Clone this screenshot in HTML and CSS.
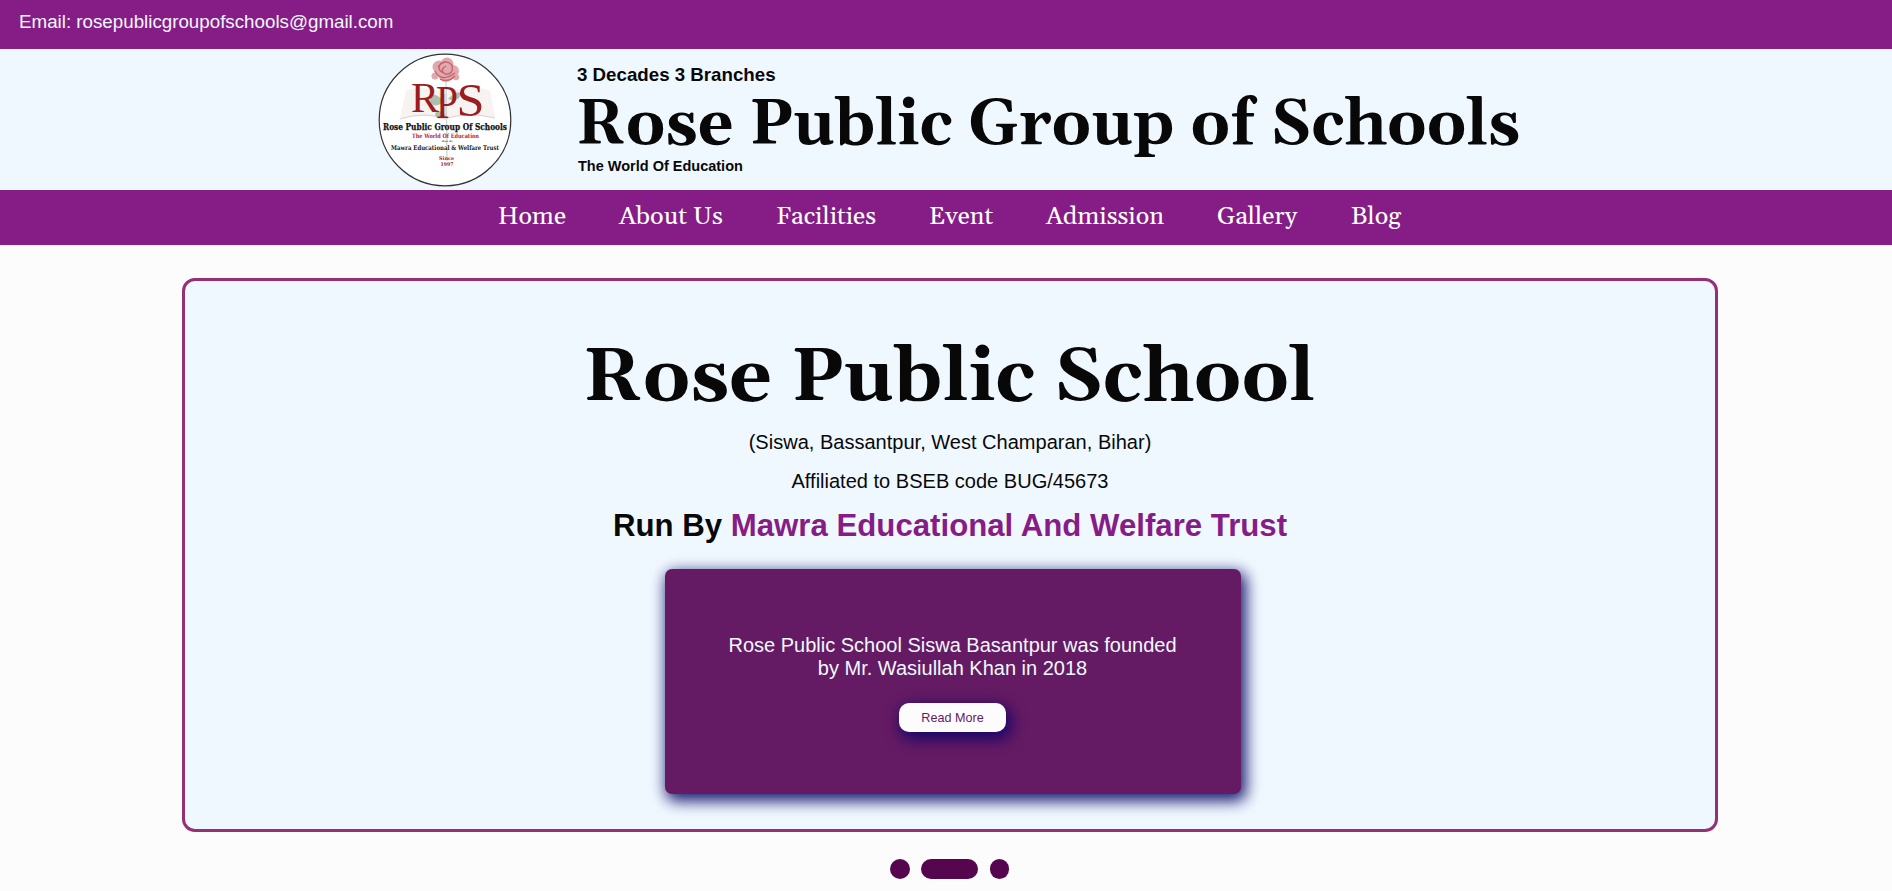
FILE: index.html
```html
<!DOCTYPE html>
<html lang="en">
<head>
<meta charset="utf-8">
<title>Rose Public Group of Schools</title>
<link rel="stylesheet" href="styles.css">
</head>
<body>
<div class="topbar">Email: rosepublicgroupofschools@gmail.com</div>
<header class="header">
  <svg class="logo" viewBox="0 0 134 134" role="img" aria-label="Rose Public School logo">
    <circle cx="67" cy="67" r="65.8" fill="#fff" stroke="#333" stroke-width="1.2"/>
    <g opacity=".5">
      <path d="M28 37 Q48 31 67 41 Q86 31 112 37 L117 65 Q87 59 67 66 Q47 59 22 66Z" fill="#eee9e3"/>
      <path d="M22 66 Q47 58 67 66 Q89 58 117 65 M67 41V65" fill="none" stroke="#b7a797" stroke-width="1"/>
      <path d="M68 27 L69 108" stroke="#a5b09f" stroke-width="1.3"/>
      <path d="M67 48 Q53 37 51 43 Q53 59 67 48Z M68 62 Q58 54 57 62 Q61 69 68 62Z M70 46 Q80 36 83 41 Q80 50 70 46Z" fill="#60805b"/>
    </g>
    <g fill="#dfa0a4" opacity=".9">
      <circle cx="61" cy="14" r="6.5"/><circle cx="69" cy="11" r="6.5"/><circle cx="75" cy="18" r="6"/><circle cx="68" cy="21" r="8"/><circle cx="57" cy="23" r="3.5"/><circle cx="78" cy="24" r="3.2"/>
    </g>
    <path d="M60 14q7-9 14-2q2 10-7 9q-6-4 1-8 M57 18q6 12 20 2 M63 10q-5 6 2 10 M62 26q8 4 15-3" fill="none" stroke="#c4606c" stroke-width="1.3"/>
    <g class="logo-serif" fill="#9c1c20">
      <text x="33" y="58.5" font-size="43" textLength="28" lengthAdjust="spacingAndGlyphs">R</text>
      <text x="58" y="65" font-size="46" textLength="22" lengthAdjust="spacingAndGlyphs">P</text>
      <text x="78.5" y="62.5" font-size="47" textLength="28" lengthAdjust="spacingAndGlyphs">S</text>
    </g>
    <g class="logo-small">
      <text x="5" y="77" font-size="8.5" textLength="124" lengthAdjust="spacingAndGlyphs" fill="#111" stroke="#111" stroke-width=".25">Rose Public Group Of Schools</text>
      <text x="34" y="84.8" font-size="6" textLength="67" lengthAdjust="spacingAndGlyphs" fill="#b8232a">The World Of Education</text>
      <text x="64" y="88.5" font-size="2.5" textLength="11" fill="#555">Run By</text>
      <text x="13" y="97" font-size="6.5" textLength="108" lengthAdjust="spacingAndGlyphs" fill="#222">Mawra Educational &amp; Welfare Trust</text>
      <text x="61" y="106.5" font-size="5" textLength="15" lengthAdjust="spacingAndGlyphs" fill="#9c1c20">Since</text>
      <text x="62.5" y="113" font-size="5" textLength="13" lengthAdjust="spacingAndGlyphs" fill="#9c1c20">1997</text>
    </g>
  </svg>
  <div class="brand">
    <h3 class="decades">3 Decades 3 Branches</h3>
    <svg class="brand-name" width="944" height="66"><text x="-1" y="53" textLength="944" lengthAdjust="spacingAndGlyphs">Rose Public Group of Schools</text></svg>
    <h4 class="motto">The World Of Education</h4>
  </div>
</header>
<nav class="nav">
  <svg width="68" height="55"><text y="34" textLength="68" lengthAdjust="spacingAndGlyphs">Home</text></svg>
  <svg width="104" height="55"><text y="34" textLength="104" lengthAdjust="spacingAndGlyphs">About Us</text></svg>
  <svg width="100" height="55"><text y="34" textLength="100" lengthAdjust="spacingAndGlyphs">Facilities</text></svg>
  <svg width="64" height="55"><text y="34" textLength="64" lengthAdjust="spacingAndGlyphs">Event</text></svg>
  <svg width="118" height="55"><text y="34" textLength="118" lengthAdjust="spacingAndGlyphs">Admission</text></svg>
  <svg width="80" height="55"><text y="34" textLength="80" lengthAdjust="spacingAndGlyphs">Gallery</text></svg>
  <svg width="50" height="55"><text y="34" textLength="50" lengthAdjust="spacingAndGlyphs">Blog</text></svg>
</nav>
<main class="hero">
  <svg class="school" width="732" height="80"><text x="-1" y="60" textLength="732" lengthAdjust="spacingAndGlyphs">Rose Public School</text></svg>
  <p class="address">(Siswa, Bassantpur, West Champaran, Bihar)</p>
  <p class="address">Affiliated to BSEB code BUG/45673</p>
  <h2 class="trust">Run By <span>Mawra Educational And Welfare Trust</span></h2>
  <section class="card">
    <p>Rose Public School Siswa Basantpur was founded<br>by Mr. Wasiullah Khan in 2018</p>
    <button class="more">Read More</button>
  </section>
</main>
<div class="dots"><i></i><i class="active"></i><i></i></div>
</body>
</html>
```
FILE: styles.css
```css
* { box-sizing: border-box; margin: 0; padding: 0; }
body { width: 1892px; height: 891px; overflow: hidden; background: #fcfcfc; color: #080808; font-family: "Liberation Sans", Arial, sans-serif; }
svg { display: block; flex: none; overflow: visible; }
.topbar { height: 49px; padding: 11px 0 0 19px; background: #861d86; color: #f0f8ff; font-size: 18.75px; line-height: 21px; }
.header { display: flex; height: 141px; background: #f0f8ff; padding-left: 378px; }
.logo { width: 134px; height: 134px; margin-top: 4px; }
.logo-serif { font-family: "Liberation Serif", serif; }
.logo-small { font-family: "DejaVu Serif", serif; font-weight: bold; }
.brand { padding: 15px 0 0 65px; }
.decades { font-size: 18.72px; line-height: 22px; height: 27px; }
.brand-name, .school { font-family: Gelasio, Georgia, "Liberation Serif", serif; font-weight: bold; fill: #080808; }
.brand-name { font-size: 64px; }
.motto { font-size: 14.5px; line-height: 17px; margin: 1px 0 0 1px; }
.nav { display: flex; gap: 53.1px; height: 55px; padding-left: 498px; background: #861d86; font-family: Gelasio, Georgia, "Liberation Serif", serif; font-size: 24.5px; fill: #fff; }
.hero { display: flex; flex-direction: column; align-items: center; width: 1536px; height: 554.4px; margin: 33px 0 0 182px; padding-top: 59px; border: 3px solid #953075; border-radius: 13px; background: #f0f8ff; }
.school { font-size: 75px; margin-bottom: 11px; }
.address { font-size: 20.05px; line-height: 23px; margin-bottom: 16px; }
.trust { font-size: 31.2px; line-height: 36px; margin-top: -1px; white-space: nowrap; }
.trust span { color: #861d86; }
.card { width: 576px; height: 224.4px; margin: 25.3px 0 0 5px; padding-top: 65px; border-radius: 7px; background: #651b63; box-shadow: 3px 5px 15px 2px #191970; text-align: center; }
.card p { color: #f0f8ff; font-size: 20px; line-height: 23px; }
.more { display: block; width: 107px; height: 29.2px; margin: 23px auto 0; border: 0; border-radius: 10px; background: #fcfcfc; color: #651b63; font: 12.6px "Liberation Sans", Arial, sans-serif; box-shadow: 3px 5px 15px 2px #15056a; }
.dots { display: flex; gap: 11.7px; margin: 26.6px 0 0 890px; }
.dots i { width: 19.6px; height: 19.6px; border-radius: 10px; background: #55064f; }
.dots .active { width: 56.6px; }
```
